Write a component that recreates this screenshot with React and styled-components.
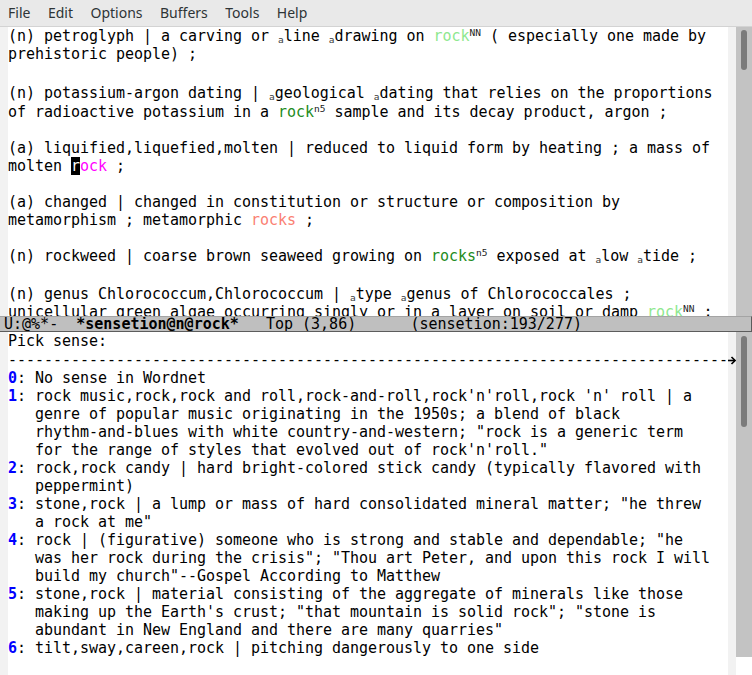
import React from "react";
import styled, { createGlobalStyle } from "styled-components";

const GlobalStyle = createGlobalStyle`
  html, body { margin: 0; padding: 0; background: #ffffff; }
  body { overflow: hidden; }
`;

const MONO = `"DejaVu Sans Mono", "Liberation Mono", monospace`;

const Frame = styled.div`
  width: 752px;
  height: 675px;
  display: flex;
  flex-direction: column;
  overflow: hidden;
  background: #ffffff;
`;

const MenuBar = styled.div`
  height: 27px;
  flex: 0 0 27px;
  box-sizing: border-box;
  border-bottom: 1px solid #d3d3d3;
  background: #e9e9e9;
  display: flex;
  align-items: center;
  gap: 17.5px;
  padding: 0 0 0 8px;
  font-family: "Noto Sans", "Open Sans", sans-serif;
  font-size: 14px;
  color: #2e3436;
`;

const MenuItem = styled.span`
  line-height: 18px;
`;

const Window = styled.div`
  display: flex;
  height: ${(p) => p.$height}px;
  flex: 0 0 ${(p) => p.$height}px;
  overflow: hidden;
`;

const Fringe = styled.div`
  width: 8px;
  flex: 0 0 8px;
  background: #f2f2f2;
  display: flex;
  flex-direction: column;
`;

const FringeSlot = styled.div`
  height: 18px;
  margin-top: ${(p) => p.$offset}px;
  display: flex;
  align-items: center;
  justify-content: center;
`;

const Body = styled.div`
  width: 720px;
  flex: 0 0 720px;
  overflow: hidden;
  background: #ffffff;
  font-family: ${MONO};
  font-size: 15px;
  letter-spacing: -0.03px;
  color: #000000;
`;

const Line = styled.div`
  height: 18px;
  line-height: 18px;
  white-space: pre;
  overflow: hidden;
  margin-top: ${(p) => p.$shift || 0}px;
`;

const Sub = styled.span`
  font-size: 9.5px;
  line-height: 0;
  vertical-align: -2px;
  color: #3a3a3a;
`;

const Sup = styled.span`
  font-size: 9.5px;
  line-height: 0;
  vertical-align: 5px;
  color: #1a1a1a;
`;

const Word = styled.span`
  color: ${(p) => p.$color};
`;

const Cursor = styled.span`
  background: #000000;
  color: #ffffff;
`;

const Num = styled.span`
  color: #0000ff;
  font-weight: bold;
`;

const ScrollColumn = styled.div`
  width: 16px;
  flex: 0 0 16px;
  background: #ffffff;
  display: flex;
  flex-direction: column;
`;

const Track = styled.div`
  height: ${(p) => p.$height}px;
  flex: 0 0 ${(p) => p.$height}px;
  background: #c3c3c3;
  display: flex;
  flex-direction: column;
`;

const Thumb = styled.div`
  width: 6px;
  height: ${(p) => p.$height}px;
  margin: ${(p) => p.$top}px 0 0 5px;
  border-radius: 3px;
  background: #7b7b7b;
`;

const ModeLine = styled.div`
  height: 16px;
  flex: 0 0 16px;
  box-sizing: border-box;
  background: #bfbfbf;
  border-top: 1px solid #a4a4a4;
  border-bottom: 1px solid #5c5c5c;
  border-right: 1px solid #5c5c5c;
  padding-left: 4px;
  font-family: ${MONO};
  font-size: 15px;
  line-height: 14px;
  white-space: pre;
  color: #000000;
  overflow: hidden;
`;

const Bold = styled.span`
  font-weight: bold;
`;

const ContArrow = () => (
  <svg width="8" height="9" viewBox="0 0 8 9">
    <path d="M0 4.5H7" stroke="#000" strokeWidth="1.6" />
    <path d="M3.5 1L7 4.5L3.5 8" stroke="#000" strokeWidth="1.6" fill="none" />
  </svg>
);

const LIGHT = "#8ee88e";
const DARK = "#228b22";
const SALMON = "#fa8072";
const MAGENTA = "#ff00ff";

const topLines = [
  <>
    (n) petroglyph | a carving or <Sub>a</Sub>line <Sub>a</Sub>drawing on <Word $color={LIGHT}>rock</Word>
    <Sup>NN</Sup> ( especially one made by
  </>,
  <>prehistoric people) ;</>,
  <> </>,
  <>
    (n) potassium-argon dating | <Sub>a</Sub>geological <Sub>a</Sub>dating that relies on the proportions
  </>,
  <>
    of radioactive potassium in a <Word $color={DARK}>rock</Word>
    <Sup>n5</Sup> sample and its decay product, argon ;
  </>,
  <> </>,
  <>(a) liquified,liquefied,molten | reduced to liquid form by heating ; a mass of</>,
  <>
    molten <Cursor>r</Cursor>
    <Word $color={MAGENTA}>ock</Word> ;
  </>,
  <> </>,
  <>(a) changed | changed in constitution or structure or composition by</>,
  <>
    metamorphism ; metamorphic <Word $color={SALMON}>rocks</Word> ;
  </>,
  <> </>,
  <>
    (n) rockweed | coarse brown seaweed growing on <Word $color={DARK}>rocks</Word>
    <Sup>n5</Sup> exposed at <Sub>a</Sub>low <Sub>a</Sub>tide ;
  </>,
  <> </>,
  <>
    (n) genus Chlorococcum,Chlorococcum | <Sub>a</Sub>type <Sub>a</Sub>genus of Chlorococcales ;
  </>,
  <>
    unicellular green algae occurring singly or in a layer on soil or damp <Word $color={LIGHT}>rock</Word>
    <Sup>NN</Sup> ;
  </>,
];

const topShifts = { 3: 3, 4: 1, 14: 2 };

const senses = [
  ["0", ["No sense in Wordnet"]],
  [
    "1",
    [
      "rock music,rock,rock and roll,rock-and-roll,rock'n'roll,rock 'n' roll | a",
      "genre of popular music originating in the 1950s; a blend of black",
      'rhythm-and-blues with white country-and-western; "rock is a generic term',
      'for the range of styles that evolved out of rock\'n\'roll."',
    ],
  ],
  [
    "2",
    [
      "rock,rock candy | hard bright-colored stick candy (typically flavored with",
      "peppermint)",
    ],
  ],
  [
    "3",
    [
      'stone,rock | a lump or mass of hard consolidated mineral matter; "he threw',
      'a rock at me"',
    ],
  ],
  [
    "4",
    [
      'rock | (figurative) someone who is strong and stable and dependable; "he',
      'was her rock during the crisis"; "Thou art Peter, and upon this rock I will',
      'build my church"--Gospel According to Matthew',
    ],
  ],
  [
    "5",
    [
      "stone,rock | material consisting of the aggregate of minerals like those",
      'making up the Earth\'s crust; "that mountain is solid rock"; "stone is',
      'abundant in New England and there are many quarries"',
    ],
  ],
  ["6", ["tilt,sway,careen,rock | pitching dangerously to one side"]],
];

export default function App() {
  return (
    <>
      <GlobalStyle />
      <Frame>
        <MenuBar>
          {["File", "Edit", "Options", "Buffers", "Tools", "Help"].map((m) => (
            <MenuItem key={m}>{m}</MenuItem>
          ))}
        </MenuBar>

        <Window $height={289}>
          <Fringe />
          <Body>
            {topLines.map((l, i) => (
              <Line key={i} $shift={topShifts[i]}>
                {l}
              </Line>
            ))}
          </Body>
          <Fringe />
          <ScrollColumn>
            <Track $height={289}>
              <Thumb $top={3} $height={40} />
            </Track>
          </ScrollColumn>
        </Window>

        <ModeLine>
          {"U:@%*-  "}
          <Bold>*sensetion@n@rock*</Bold>
          {"   Top (3,86)      (sensetion:193/277)"}
        </ModeLine>

        <Window $height={343}>
          <Fringe />
          <Body>
            <Line>Pick sense:</Line>
            <Line $shift={1}>{"-".repeat(82)}</Line>
            {senses.map(([n, rows]) =>
              rows.map((r, j) => (
                <Line key={n + "-" + j}>
                  {j === 0 ? (
                    <>
                      <Num>{n}</Num>
                      {": " + r}
                    </>
                  ) : (
                    "   " + r
                  )}
                </Line>
              ))
            )}
          </Body>
          <Fringe>
            <FringeSlot $offset={19}>
              <ContArrow />
            </FringeSlot>
          </Fringe>
          <ScrollColumn>
            <Track $height={325}>
              <Thumb $top={4} $height={91} />
            </Track>
          </ScrollColumn>
        </Window>
      </Frame>
    </>
  );
}
